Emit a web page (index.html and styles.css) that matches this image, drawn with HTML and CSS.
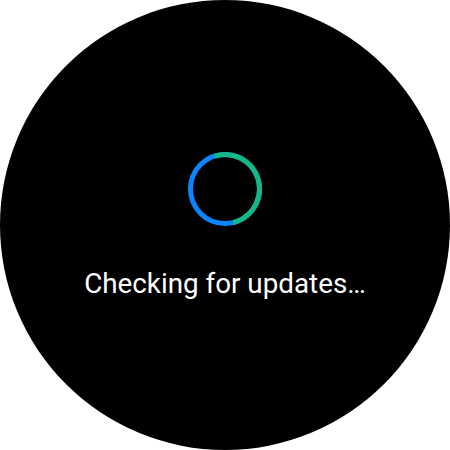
FILE: index.html
```html
<!DOCTYPE html>
<html>
<head>
<meta charset="utf-8">
<link rel="stylesheet" href="styles.css">
</head>
<body>
<div class="watch">
  <svg class="spinner" width="76" height="76" viewBox="0 0 76 76">
    <circle cx="38" cy="38" r="34.5" fill="none" stroke="#0a84ff" stroke-width="5"/>
    <circle cx="38" cy="38" r="34.5" fill="none" stroke="#14b884" stroke-width="5"
      stroke-dasharray="110.8 300" transform="rotate(-108 38 38)"/>
  </svg>
  <div class="label">Checking for updates…</div>
</div>
</body>
</html>
```
FILE: styles.css
```css
html, body {
  margin: 0;
  padding: 0;
  background: #ffffff;
}
.watch {
  width: 450px;
  height: 450px;
  border-radius: 50%;
  background: #000000;
  display: flex;
  flex-direction: column;
  align-items: center;
  box-sizing: border-box;
  padding-top: 151px;
}
.spinner {
  display: block;
}
.label {
  margin-top: 41px;
  font-family: Roboto, "Liberation Sans", sans-serif;
  font-size: 27.8px;
  line-height: 32px;
  color: #ffffff;
}
```
